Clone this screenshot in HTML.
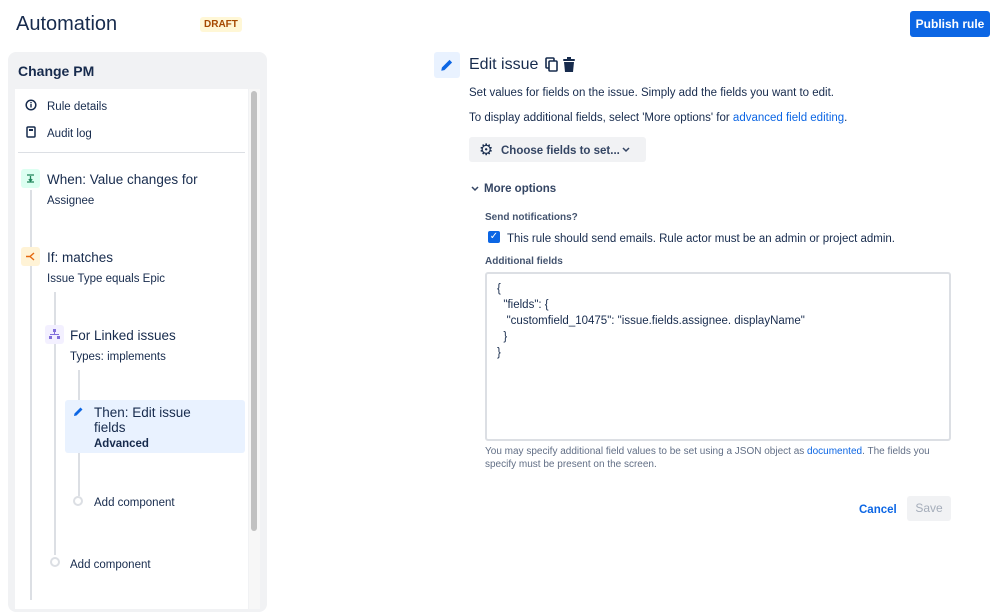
<!DOCTYPE html>
<html><head><meta charset="utf-8"><style>
*{margin:0;padding:0;box-sizing:border-box}
body{width:999px;height:595px;overflow:hidden;background:#fff;font-family:"Liberation Sans",sans-serif;color:#172b4d;position:relative}
.a{position:absolute;white-space:nowrap}
.s{font-size:11.5px;line-height:14px;margin-top:1px}
.m{font-size:13.5px;line-height:16px;margin-top:1px}
</style></head><body>
<div class="a" style="left:16px;top:13px;font-size:20px;color:#172b4d">Automation</div>
<div class="a" style="left:200px;top:17px;background:#fff7d6;color:#a54800;font-size:10px;font-weight:bold;padding:2px 4px;border-radius:3px">DRAFT</div>
<div class="a" style="left:910px;top:11px;width:80px;height:26px;background:#0c66e4;color:#fff;border-radius:3px;font-size:12px;font-weight:bold;text-align:center;line-height:26px">Publish rule</div>

<div class="a" style="left:8px;top:52px;width:259px;height:560px;background:#f1f2f4;border-radius:8px"></div>
<div class="a" style="left:18px;top:63px;font-size:14px;font-weight:bold">Change PM</div>
<div class="a" style="left:15px;top:89px;width:233px;height:520px;background:#fff"></div>
<div class="a" style="left:249px;top:89px;width:11px;height:520px;background:#f7f7f7"></div>
<div class="a" style="left:251px;top:91px;width:6px;height:440px;background:#c1c1c1;border-radius:3px"></div>

<svg class="a" style="left:25px;top:99px" width="12" height="12" viewBox="0 0 12 12"><circle cx="6" cy="6" r="4.8" fill="none" stroke="#172b4d" stroke-width="1.5"/><rect x="5.3" y="5" width="1.4" height="3.5" fill="#172b4d"/><rect x="5.3" y="3" width="1.4" height="1.3" fill="#172b4d"/></svg>
<div class="a s" style="left:47px;top:99px">Rule details</div>
<svg class="a" style="left:26px;top:126px" width="10" height="12" viewBox="0 0 10 12"><rect x="1" y="1" width="8" height="10" rx="1" fill="none" stroke="#172b4d" stroke-width="1.5"/><rect x="3" y="3" width="4" height="2" fill="#172b4d"/></svg>
<div class="a s" style="left:47px;top:126px">Audit log</div>
<div class="a" style="left:18px;top:152px;width:227px;height:1px;background:#dcdfe4"></div>

<div class="a" style="left:30px;top:190px;width:2px;height:410px;background:#dcdfe4"></div>
<div class="a" style="left:54px;top:292px;width:2px;height:263px;background:#dcdfe4"></div>
<div class="a" style="left:78px;top:370px;width:2px;height:126px;background:#dcdfe4"></div>

<div class="a" style="left:21px;top:169px;width:19px;height:19px;background:#dcfff1;border-radius:3px"></div>
<svg class="a" style="left:26px;top:174px" width="9" height="9" viewBox="0 0 9 9" stroke="#1f845a" stroke-width="1.3" fill="none"><path d="M1 1h7M1 8h7M4.5 2v5M2.8 5.2l1.7 1.7 1.7-1.7"/></svg>
<div class="a m" style="left:47px;top:171px">When: Value changes for</div>
<div class="a s" style="left:47px;top:193px">Assignee</div>

<div class="a" style="left:21px;top:247px;width:19px;height:19px;background:#fff3d6;border-radius:3px"></div>
<svg class="a" style="left:25px;top:251px" width="11" height="11" viewBox="0 0 11 11" stroke="#e56910" stroke-width="1.4" fill="none"><path d="M1 5.5h4M5 5.5L9 2M5 5.5L9 9"/></svg>
<div class="a m" style="left:47px;top:249px">If: matches</div>
<div class="a s" style="left:47px;top:271px">Issue Type equals Epic</div>

<div class="a" style="left:45px;top:325px;width:19px;height:19px;background:#f3f0ff;border-radius:3px"></div>
<svg class="a" style="left:49px;top:329px" width="11" height="11" viewBox="0 0 11 11" fill="#8270db"><rect x="4" y="0" width="3" height="3"/><rect x="0" y="7" width="3" height="3"/><rect x="8" y="7" width="3" height="3"/><rect x="5" y="3" width="1" height="3"/><rect x="1" y="5" width="9" height="1"/></svg>
<div class="a m" style="left:70px;top:327px">For Linked issues</div>
<div class="a s" style="left:70px;top:349px">Types: implements</div>

<div class="a" style="left:65px;top:400px;width:180px;height:53px;background:#e9f2ff;border-radius:3px"></div>
<svg class="a" style="left:73px;top:406px" width="11" height="11" viewBox="0 0 11 11"><path d="M1 10l0.5-2.5L7.5 1.5l2 2L3.5 9.5z" fill="#0c66e4"/></svg>
<div class="a m" style="left:94px;top:404px;line-height:15px">Then: Edit issue<br>fields</div>
<div class="a s" style="left:94px;top:436px;font-weight:bold">Advanced</div>

<div class="a" style="left:73px;top:496px;width:10px;height:10px;border:2px solid #dcdfe4;border-radius:50%;background:#fff"></div>
<div class="a s" style="left:94px;top:495px">Add component</div>
<div class="a" style="left:50px;top:557px;width:10px;height:10px;border:2px solid #dcdfe4;border-radius:50%;background:#fff"></div>
<div class="a s" style="left:70px;top:557px">Add component</div>

<div class="a" style="left:434px;top:52px;width:26px;height:26px;background:#e9f2ff;border-radius:3px"></div>
<svg class="a" style="left:440px;top:58px" width="14" height="14" viewBox="0 0 11 11"><path d="M1 10l0.5-2.5L7.5 1.5l2 2L3.5 9.5z" fill="#0c66e4"/></svg>
<div class="a" style="left:469px;top:56px;font-size:16px">Edit issue</div>
<svg class="a" style="left:545px;top:57px" width="13" height="15" viewBox="0 0 13 15"><rect x="1" y="1" width="8" height="10" rx="1" fill="none" stroke="#172b4d" stroke-width="1.6"/><rect x="4" y="4" width="8" height="10" rx="1" fill="#fff" stroke="#172b4d" stroke-width="1.6"/></svg>
<svg class="a" style="left:562px;top:57px" width="14" height="15" viewBox="0 0 14 15" fill="#172b4d"><rect x="1" y="2" width="12" height="2" rx="1"/><rect x="5" y="0" width="4" height="2"/><path d="M2 5h10l-1 10H3z"/></svg>
<div class="a s" style="left:469px;top:85px">Set values for fields on the issue. Simply add the fields you want to edit.</div>
<div class="a s" style="left:469px;top:110px">To display additional fields, select 'More options' for <span style="color:#0c66e4">advanced field editing</span>.</div>
<div class="a" style="left:469px;top:137px;width:177px;height:25px;background:#f1f2f4;border-radius:3px"></div>
<div class="a" style="left:479px;top:140px;font-size:16px">⚙</div>
<div class="a s" style="left:501px;top:143px;font-weight:bold;color:#344563">Choose fields to set...</div>
<svg class="a" style="left:622px;top:147px" width="8" height="6" viewBox="0 0 8 6"><path d="M1 1l3 3 3-3" stroke="#344563" stroke-width="1.5" fill="none"/></svg>
<svg class="a" style="left:471px;top:186px" width="8" height="6" viewBox="0 0 8 6"><path d="M1 1l3 3 3-3" stroke="#344563" stroke-width="1.5" fill="none"/></svg>
<div class="a s" style="left:484px;top:181px;font-weight:bold;color:#344563">More options</div>
<div class="a" style="left:485px;top:212px;font-size:10px;font-weight:bold;color:#44546f">Send notifications?</div>
<div class="a" style="left:488px;top:231px;width:12px;height:12px;background:#0c66e4;border-radius:2px;color:#fff;font-size:10px;text-align:center;line-height:12px">✓</div>
<div class="a s" style="left:507px;top:231px">This rule should send emails. Rule actor must be an admin or project admin.</div>
<div class="a" style="left:485px;top:256px;font-size:10px;font-weight:bold;color:#44546f">Additional fields</div>
<div class="a" style="left:485px;top:272px;width:466px;height:169px;border:2px solid #dcdfe4;border-radius:3px"></div>
<div class="a s" style="left:497px;top:280px;line-height:16px;white-space:pre">{
  "fields": {
   "customfield_10475": "issue.fields.assignee. displayName"
  }
}</div>
<div class="a" style="left:485px;top:445px;font-size:10px;color:#626f86;line-height:13px">You may specify additional field values to be set using a JSON object as <span style="color:#0c66e4">documented</span>. The fields you<br>specify must be present on the screen.</div>
<div class="a s" style="left:859px;top:502px;color:#0c66e4;font-weight:bold">Cancel</div>
<div class="a" style="left:907px;top:496px;width:44px;height:25px;background:#f1f2f4;border-radius:3px;color:#a5adba;font-size:12px;text-align:center;line-height:25px">Save</div>
</body></html>
